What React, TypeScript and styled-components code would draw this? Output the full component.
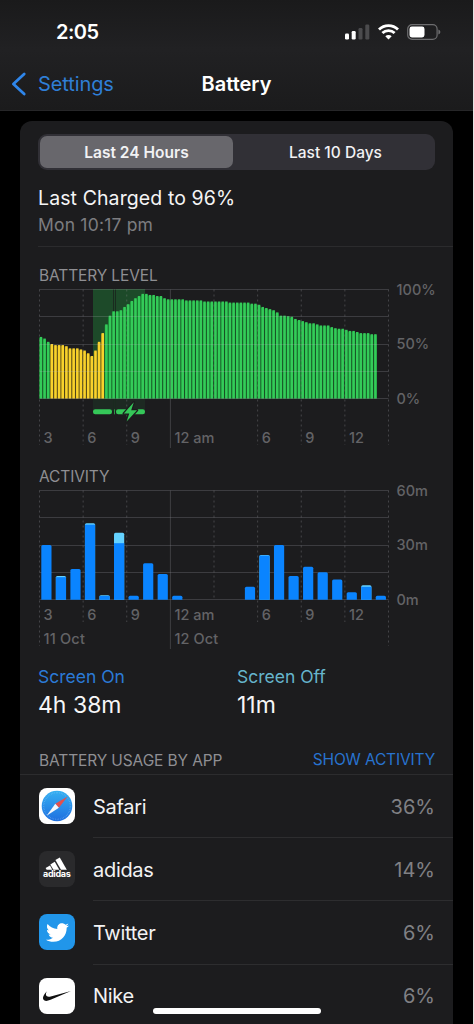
import React from 'react';
import styled, { createGlobalStyle } from 'styled-components';
import { FaTwitter } from 'react-icons/fa';
import { SiNike } from 'react-icons/si';

const GlobalStyle = createGlobalStyle`
  body {
    margin: 0;
    background: #000;
    font-family: Inter, "Liberation Sans", sans-serif;
    -webkit-font-smoothing: antialiased;
  }

  * {
    box-sizing: border-box;
  }
`;

const Screen = styled.div`
  position: relative;
  width: 474px;
  height: 1024px;
  overflow: hidden;
  background: #000;
  border-right: 1px solid #e4e4e4;
`;

const Header = styled.header`
  height: 111px;
  background: linear-gradient(#1a1a1b 0%, #212123 45%, #1b1b1c 100%);
  border-bottom: 1px solid #262628;
`;

const StatusBar = styled.div`
  display: flex;
  align-items: center;
  justify-content: space-between;
  height: 64px;
  padding: 0 32px 0 56px;
`;

const Clock = styled.span`
  font-size: 20px;
  font-weight: 600;
  letter-spacing: -0.5px;
  color: #fff;
`;

const StatusIcons = styled.div`
  display: flex;
  align-items: center;
  gap: 8px;
`;

const NavBar = styled.nav`
  display: grid;
  grid-template-columns: 1fr auto 1fr;
  align-items: center;
  height: 40px;
  padding: 0 11px;
`;

const BackLink = styled.a`
  display: flex;
  align-items: center;
  gap: 11px;
  font-size: 20px;
  letter-spacing: -0.1px;
  color: #2f7fd6;
`;

const NavTitle = styled.h1`
  margin: 0;
  font-size: 20px;
  font-weight: 600;
  letter-spacing: 0;
  color: #fff;
`;

const Card = styled.main`
  width: 433px;
  height: 910px;
  margin: 10px 0 0 20px;
  padding-top: 13px;
  border-radius: 12px 12px 0 0;
  background: #1c1c1e;
`;

const Segmented = styled.div`
  display: grid;
  grid-template-columns: 193px 1fr;
  column-gap: 5px;
  width: 397px;
  height: 36px;
  margin-left: 18px;
  padding: 2px;
  border-radius: 9px;
  background: #313036;
`;

const Segment = styled.div<{ $active?: boolean }>`
  display: flex;
  align-items: center;
  justify-content: center;
  border-radius: 7px;
  background: ${({ $active }) => ($active ? '#68676c' : 'transparent')};
  font-size: 15.5px;
  font-weight: ${({ $active }) => ($active ? 600 : 500)};
  letter-spacing: 0;
  color: #f2f2f4;
`;

const Summary = styled.section`
  height: 77px;
  margin-left: 18px;
  padding-top: 16px;
  border-bottom: 1px solid #2b2b2d;
`;

const SummaryTitle = styled.div`
  font-size: 19.5px;
  line-height: 24px;
  letter-spacing: 0.1px;
  color: #f4f4f5;
`;

const SummaryTime = styled.div`
  margin-top: 3px;
  font-size: 17.5px;
  line-height: 24px;
  letter-spacing: 0.2px;
  color: #7d7d80;
`;

const ChartSection = styled.section<{ $top: number }>`
  padding-top: ${({ $top }) => $top}px;
`;

const SectionLabel = styled.h2`
  margin: 0;
  padding: 1px 0 0 19px;
  font-size: 15.5px;
  font-weight: 400;
  line-height: 19px;
  letter-spacing: -0.12px;
  color: #8f8f93;
`;

const Chart = styled.svg`
  display: block;
  overflow: visible;

  text {
    font-size: 14.5px;
    font-weight: 500;
    fill: #636366;
  }
`;

const Stats = styled.section`
  display: grid;
  grid-template-columns: 199px 1fr;
  height: 97px;
  padding: 14px 0 0 18px;
`;

const StatName = styled.div<{ $color: string }>`
  font-size: 17.5px;
  line-height: 22px;
  letter-spacing: 0;
  color: ${({ $color }) => $color};
`;

const StatValue = styled.div`
  margin-top: 3px;
  font-size: 23px;
  line-height: 28px;
  letter-spacing: 0;
  color: #f6f6f7;
`;

const UsageHeader = styled.div`
  display: flex;
  align-items: center;
  justify-content: space-between;
  height: 26px;
  padding: 0 18px 4px 0;
  border-bottom: 1px solid #2c2c2e;
`;

const UsageAction = styled.span`
  font-size: 15.5px;
  letter-spacing: -0.16px;
  color: #2873cf;
`;

const AppList = styled.ul`
  margin: 0;
  padding: 0 0 0 19px;
  list-style: none;
`;

const AppRow = styled.li`
  display: flex;
  align-items: center;
  gap: 18px;
  height: 63.2px;
`;

const AppIcon = styled.span<{ $bg: string; $color?: string }>`
  display: flex;
  flex: none;
  align-items: center;
  justify-content: center;
  width: 36px;
  height: 36px;
  margin-bottom: 1px;
  border-radius: 8px;
  background: ${({ $bg }) => $bg};
  color: ${({ $color }) => $color || '#fff'};
  overflow: hidden;
`;

const AppBody = styled.div`
  display: flex;
  flex: 1;
  align-items: center;
  justify-content: space-between;
  height: 100%;
  padding: 1px 18px 0 0;
  border-bottom: 1px solid #2d2d2f;
`;

const AppName = styled.span`
  font-size: 20px;
  letter-spacing: -0.3px;
  color: #f2f2f3;
`;

const AppPercent = styled.span`
  font-size: 20px;
  letter-spacing: 0;
  color: #808084;
`;

const HomeIndicator = styled.div`
  position: absolute;
  left: 153px;
  top: 1008px;
  width: 168px;
  height: 6px;
  border-radius: 3px;
  background: #fff;
`;

// Plot geometry shared by both charts: 24 hours, one vertical line every 3
const LEFT = 19.5;
const TOP = 4.5;
const WIDTH = 349;
const HEIGHT = 109;
const BASE = TOP + HEIGHT;
const STEP = WIDTH / 8;

// percent of charge, one value per 15 minutes
const levels: number[] = [
  56.5, 55, 52, 50, 49, 49, 49, 48, 46, 46, 46, 45, 44, 41.5, 39, 44, 52, 60,
  68, 76, 80, 80, 81, 84, 86.5, 89.5, 92, 94, 96, 96, 95, 95, 94, 94, 92, 91,
  91, 91, 91, 91, 90, 90, 90, 90, 90, 89, 89, 89, 89, 89, 89, 89, 88, 88, 88,
  88, 88, 88, 87, 87, 86, 84, 83, 82, 81, 79, 76, 76, 75.5, 75, 73, 72, 71, 70,
  69, 69, 68, 67, 67, 67, 65.5, 64.5, 64, 64, 63, 62, 62, 61, 60, 60, 60, 59,
  59,
];

// minutes per hour: [screen on, screen off]
const activity: [number, number][] = [
  [30, 0], [12.3, 0.7], [16.8, 0], [41.2, 0.8], [2, 0.4], [31, 5.8], [2, 0],
  [20, 0], [14, 0], [2, 0], [0, 0], [0, 0], [0, 0], [0, 0], [7, 0], [24.2, 0.3],
  [30, 0], [13, 0], [18, 0], [15, 0], [11, 0], [4, 0], [7, 0.8], [2, 0],
];

const hours: [number, string][] = [
  [0, '3'], [1, '6'], [2, '9'], [3, '12 am'], [5, '6'], [6, '9'], [7, '12'],
];

interface GridProps {
  lineEnds: number[];
  labels: string[];
}

const Grid: React.FC<GridProps> = ({ lineEnds, labels }) => (
  <g>
    {[0, 1, 2, 3, 4].map((i) => (
      <line
        key={i}
        x1={LEFT}
        x2={LEFT + WIDTH}
        y1={Math.floor(TOP + (HEIGHT / 4) * i) + 0.5}
        y2={Math.floor(TOP + (HEIGHT / 4) * i) + 0.5}
        stroke="rgba(190, 190, 200, 0.2)"
      />
    ))}
    {lineEnds.map((end, i) => (
      <line
        key={i}
        x1={LEFT + STEP * i}
        x2={LEFT + STEP * i}
        y1={TOP}
        y2={end}
        stroke={i === 3 ? 'rgba(130, 130, 135, 0.35)' : 'rgba(130, 130, 135, 0.4)'}
        strokeDasharray={i === 3 ? undefined : '2 3'}
      />
    ))}
    {labels.map((label, i) => (
      <text key={label} x={376.5} y={TOP + 5 + (HEIGHT / 2) * i}>
        {label}
      </text>
    ))}
  </g>
);

const BatteryChart: React.FC = () => {
  const slot = WIDTH / 96;
  return (
    <Chart width="433" height="165">
      <rect x="73" y="4" width="52" height="122" fill="#1f3a27" opacity="0.45" />
      <rect x="73" y="4" width="52" height="110" fill="#1d4a29" />
      <rect x="93" y="4" width="1" height="122" fill="#1a2a1f" />
      <rect x="95" y="4" width="1" height="122" fill="#1a2a1f" />
      {levels.map((level, i) => {
        const low = i >= 3 && i <= 17;
        const h = (level / 100) * HEIGHT;
        const x = LEFT - 0.3 + i * slot;
        return (
          <g key={i}>
            <rect x={x} y={BASE - h + 1} width={slot - 0.4} height={h - 1} fill={low ? '#806a14' : '#17822f'} />
            <rect x={x + 0.5} y={BASE - h} width={2.5} height={h} fill={low ? '#f8d22c' : '#34cb59'} />
          </g>
        );
      })}
      <Grid
        lineEnds={[160, 160, 160, 163, BASE, 160, 160, 160, 160]}
        labels={['100%', '50%', '0%']}
      />
      <g fill="#35c759">
        <rect x="73" y="124.3" width="19" height="5" rx="2.2" />
        <rect x="94" y="124.3" width="1" height="5" opacity="0.7" />
        <rect x="96" y="124.3" width="29" height="5" rx="2.2" />
        <path
          d="M113.8 117.3 L103.8 128.5 H109.3 L106.6 136.6 L117 125.2 H111.2 Z"
          stroke="#1c1c1e"
          strokeWidth="2.6"
          strokeLinejoin="round"
          paintOrder="stroke"
        />
      </g>
      {hours.map(([i, label]) => (
        <text key={i} x={LEFT + STEP * i + 4} y={157.5}>
          {label}
        </text>
      ))}
    </Chart>
  );
};

const ActivityChart: React.FC = () => {
  const slot = WIDTH / 24;
  const scale = HEIGHT / 60;
  return (
    <Chart width="433" height="166">
      <Grid
        lineEnds={[160, 136, 136, 163, BASE, 136, 136, 136, 160]}
        labels={['60m', '30m', '0m']}
      />
      {activity.map(([on, off], i) => {
        const total = (on + off) * scale;
        const x = LEFT + i * slot + 1.8;
        if (!total) {
          return null;
        }
        return (
          <g key={i}>
            <path
              d={`M${x} ${BASE + 0.3}v${-total + 1.2}q0 -1.5 1.5 -1.5h7.2q1.5 0 1.5 1.5v${total - 1.2}z`}
              fill={off ? '#64d2ff' : '#0a84ff'}
            />
            {off > 0 && (
              <rect x={x} y={BASE - on * scale} width={10.2} height={on * scale + 0.3} fill="#0a84ff" />
            )}
          </g>
        );
      })}
      {hours.map(([i, label]) => (
        <text key={i} x={LEFT + STEP * i + 4} y={133.5}>
          {label}
        </text>
      ))}
      <text x={LEFT + 4} y={157.5} letterSpacing="0.2">11 Oct</text>
      <text x={LEFT + STEP * 3 + 4} y={157.5} letterSpacing="0.1">12 Oct</text>
    </Chart>
  );
};

const SignalIcon: React.FC = () => (
  <svg width="25" height="16" viewBox="0 0 25 16">
    <rect x="0" y="9.5" width="4" height="6" rx="1.2" fill="#fff" />
    <rect x="6.7" y="7" width="4" height="8.5" rx="1.2" fill="#fff" />
    <rect x="13.5" y="4" width="4" height="11.5" rx="1.2" fill="#4b4b4d" />
    <rect x="20.3" y="0.5" width="4" height="15" rx="1.2" fill="#4b4b4d" />
  </svg>
);

const WifiIcon: React.FC = () => (
  <svg width="21" height="16" viewBox="0 0 21 16" fill="none" stroke="#fff" strokeWidth="2.8">
    <path d="M1 5.6 A13.4 13.4 0 0 1 20 5.6" />
    <path d="M4.4 9.1 A8.6 8.6 0 0 1 16.6 9.1" />
    <path d="M10.5 15.4 L7.3 12.2 A4.6 4.6 0 0 1 13.7 12.2 Z" fill="#fff" stroke="none" />
  </svg>
);

const BatteryIcon: React.FC = () => (
  <svg width="34" height="16" viewBox="0 0 34 16">
    <rect x="0.7" y="0.7" width="29.4" height="14.6" rx="4.4" fill="none" stroke="#6d6d6f" strokeWidth="1.2" />
    <rect x="2.5" y="2.5" width="15" height="11" rx="2.4" fill="#fff" />
    <path d="M31.4 5.4 Q33.4 6.2 33.4 8 T31.4 10.6 Z" fill="#6d6d6f" />
  </svg>
);

const ChevronLeft: React.FC = () => (
  <svg width="16" height="24" viewBox="0 0 16 24" fill="none">
    <path d="M13.2 2 L2.4 12 L13.2 22" stroke="#2f86ea" strokeWidth="2.8" strokeLinecap="round" strokeLinejoin="round" />
  </svg>
);

const SafariLogo: React.FC = () => (
  <svg width="36" height="36" viewBox="0 0 36 36">
    <defs>
      <linearGradient id="compass" x1="0" y1="0" x2="0" y2="1">
        <stop offset="0" stopColor="#35b0f2" />
        <stop offset="1" stopColor="#1f6fe0" />
      </linearGradient>
    </defs>
    <circle cx="18" cy="18" r="15.3" fill="url(#compass)" />
    <circle cx="18" cy="18" r="13.3" fill="none" stroke="#a9d8fa" strokeWidth="1.3" strokeDasharray="0.5 1.2" opacity="0.5" />
    <path d="M28.6 8.4 L16.3 15.8 L19.9 19.8 Z" fill="#e2504e" />
    <path d="M7.6 27.8 L16.3 15.8 L19.9 19.8 Z" fill="#f5f7fa" />
  </svg>
);

const LogoWord = styled.text`
  font-size: 9px;
  font-weight: 700;
  letter-spacing: -0.3px;
  text-anchor: middle;
`;

const AdidasLogo: React.FC = () => (
  <svg width="36" height="36" viewBox="0 0 36 36" fill="#fff">
    <path d="M16.4 9.1 L20.8 6.6 L27.8 18.8 H22 Z" />
    <path d="M11.3 13.4 L15.7 10.8 L20.3 18.8 H14.4 Z" />
    <path d="M6.6 17.1 L11 14.6 L13.3 18.8 H7.6 Z" />
    <LogoWord x="17.8" y="26">adidas</LogoWord>
  </svg>
);

const App: React.FC = () => (
  <>
    <GlobalStyle />
    <Screen>
      <Header>
        <StatusBar>
          <Clock>2:05</Clock>
          <StatusIcons>
            <SignalIcon />
            <WifiIcon />
            <BatteryIcon />
          </StatusIcons>
        </StatusBar>
        <NavBar>
          <BackLink>
            <ChevronLeft />
            Settings
          </BackLink>
          <NavTitle>Battery</NavTitle>
        </NavBar>
      </Header>
      <Card>
        <Segmented>
          <Segment $active>Last 24 Hours</Segment>
          <Segment>Last 10 Days</Segment>
        </Segmented>
        <Summary>
          <SummaryTitle>Last Charged to 96%</SummaryTitle>
          <SummaryTime>Mon 10:17 pm</SummaryTime>
        </Summary>
        <ChartSection $top={18}>
          <SectionLabel>BATTERY LEVEL</SectionLabel>
          <BatteryChart />
        </ChartSection>
        <ChartSection $top={16}>
          <SectionLabel>ACTIVITY</SectionLabel>
          <ActivityChart />
        </ChartSection>
        <Stats>
          <div>
            <StatName $color="#2b7ad6">Screen On</StatName>
            <StatValue>4h 38m</StatValue>
          </div>
          <div>
            <StatName $color="#66b5cc">Screen Off</StatName>
            <StatValue>11m</StatValue>
          </div>
        </Stats>
        <UsageHeader>
          <SectionLabel>BATTERY USAGE BY APP</SectionLabel>
          <UsageAction>SHOW ACTIVITY</UsageAction>
        </UsageHeader>
        <AppList>
          <AppRow>
            <AppIcon $bg="#fff"><SafariLogo /></AppIcon>
            <AppBody>
              <AppName>Safari</AppName>
              <AppPercent>36%</AppPercent>
            </AppBody>
          </AppRow>
          <AppRow>
            <AppIcon $bg="#2a2a2c"><AdidasLogo /></AppIcon>
            <AppBody>
              <AppName>adidas</AppName>
              <AppPercent>14%</AppPercent>
            </AppBody>
          </AppRow>
          <AppRow>
            <AppIcon $bg="#2196ea"><FaTwitter size={23} /></AppIcon>
            <AppBody>
              <AppName>Twitter</AppName>
              <AppPercent>6%</AppPercent>
            </AppBody>
          </AppRow>
          <AppRow>
            <AppIcon $bg="#fff" $color="#111"><SiNike size={28} /></AppIcon>
            <AppBody>
              <AppName>Nike</AppName>
              <AppPercent>6%</AppPercent>
            </AppBody>
          </AppRow>
        </AppList>
      </Card>
      <HomeIndicator />
    </Screen>
  </>
);

export default App;
